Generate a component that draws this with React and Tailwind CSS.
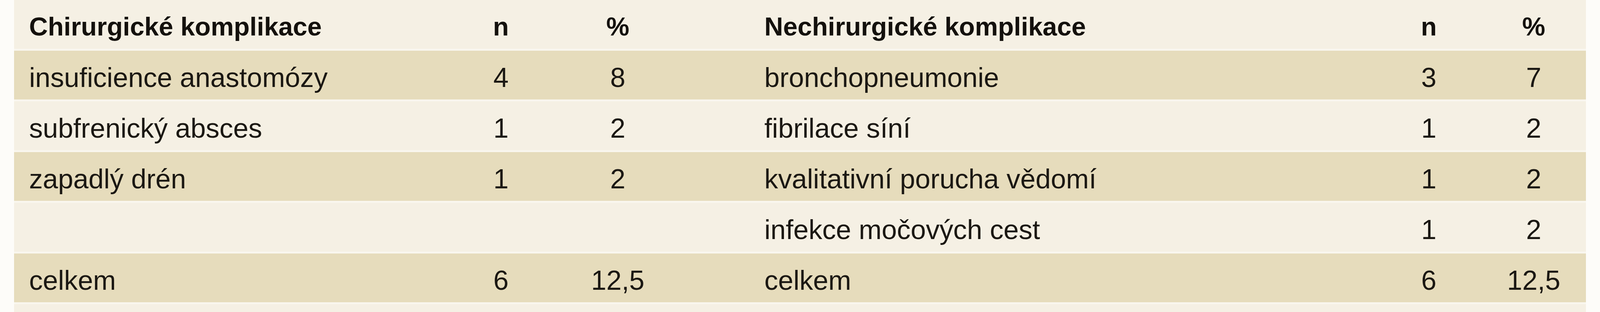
const ROWS = [
  ['insuficience anastomózy', '4', '8', 'bronchopneumonie', '3', '7'],
  ['subfrenický absces', '1', '2', 'fibrilace síní', '1', '2'],
  ['zapadlý drén', '1', '2', 'kvalitativní porucha vědomí', '1', '2'],
  ['', '', '', 'infekce močových cest', '1', '2'],
  ['celkem', '6', '12,5', 'celkem', '6', '12,5'],
];

// column widths follow the table proportions, so the layout stretches with the window
const grid =
  'grid grid-cols-[1300fr_176fr_490fr_1979fr_176fr_360fr] h-[130px] border-b-[5px] border-[#f9f6ee]';

function Row({ cells, dark, head }) {
  const text = head
    ? 'pt-[12px] leading-[113px] text-[calc(35px+0.767vw)] font-bold text-[#14110d]'
    : 'pt-[12px] leading-[113px] text-[calc(37px+0.81vw)] text-[#1b1813]';
  return (
    <div className={`${grid} ${dark ? 'bg-[#e6dcbc]' : 'bg-[#f5f0e4]'}`}>
      <div className={`${text} pl-[3.3%] whitespace-nowrap`}>{cells[0]}</div>
      <div className={`${text} text-center`}>{cells[1]}</div>
      <div className={`${text} text-center`}>{cells[2]}</div>
      <div className={`${text} pl-[8.74%] whitespace-nowrap`}>{cells[3]}</div>
      <div className={`${text} text-center`}>{cells[4]}</div>
      <div className={`${text} pl-[17.2%] text-center`}>{cells[5]}</div>
    </div>
  );
}

export default function App() {
  return (
    <div
      className="w-full h-[800px] overflow-hidden bg-[#fdfcf9] px-[0.877%]"
      style={{ fontFamily: '"Liberation Sans", Arial, sans-serif' }}
    >
      <div className="w-full h-[800px] bg-[#f5f0e4]">
        <Row head cells={['Chirurgické komplikace', 'n', '%', 'Nechirurgické komplikace', 'n', '%']} />
        {ROWS.map((r, i) => (
          <Row key={i} cells={r} dark={i % 2 === 0} />
        ))}
      </div>
    </div>
  );
}
